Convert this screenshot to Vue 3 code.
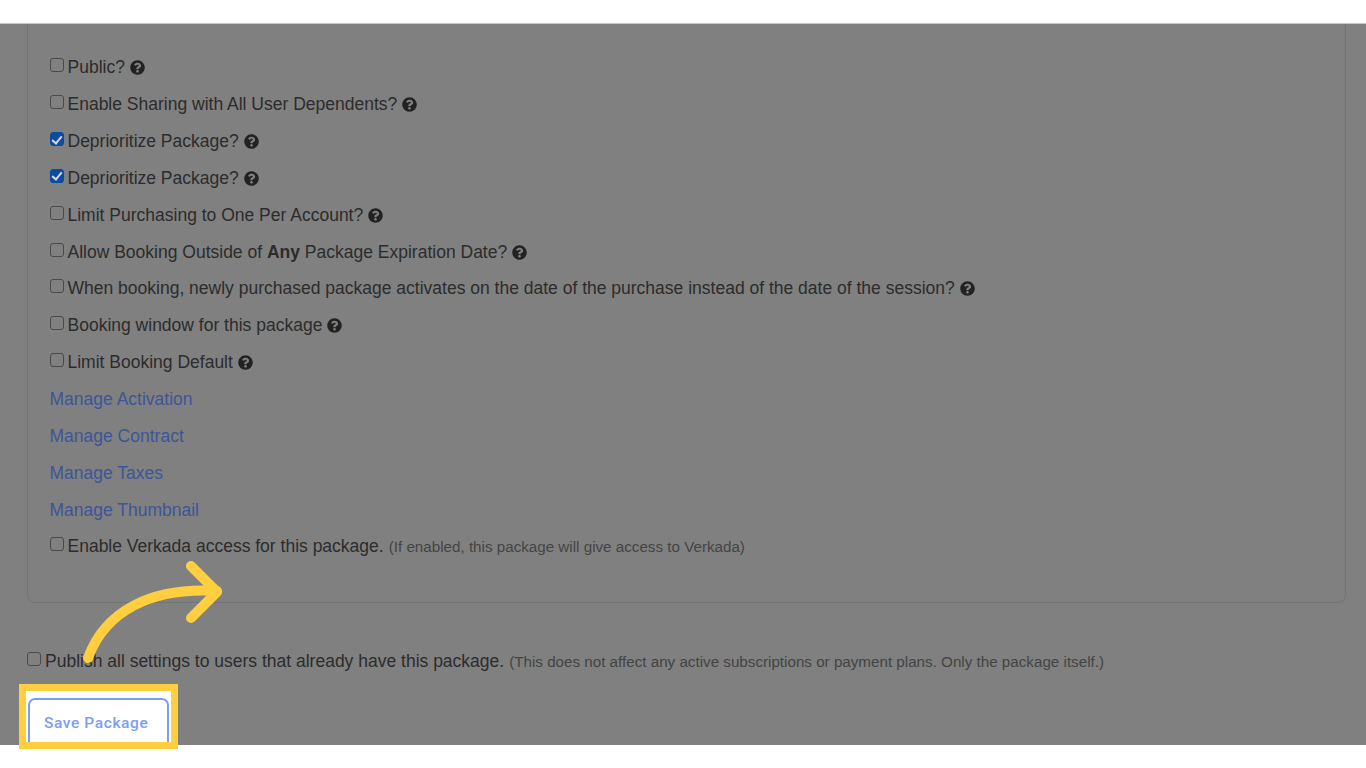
<script setup>
const rows = [
  { label: 'Public?', help: true },
  { label: 'Enable Sharing with All User Dependents?', help: true },
  { label: 'Deprioritize Package?', help: true, checked: true },
  { label: 'Deprioritize Package?', help: true, checked: true },
  { label: 'Limit Purchasing to One Per Account?', help: true },
  { before: 'Allow Booking Outside of ', bold: 'Any', label: ' Package Expiration Date?', help: true },
  { label: 'When booking, newly purchased package activates on the date of the purchase instead of the date of the session?', help: true },
  { label: 'Booking window for this package', help: true },
  { label: 'Limit Booking Default', help: true },
]
const links = ['Manage Activation', 'Manage Contract', 'Manage Taxes', 'Manage Thumbnail']

const helpPath = 'M504 256c0 136.997-111.043 248-248 248S8 392.997 8 256C8 119.083 119.043 8 256 8s248 111.083 248 248zM262.655 90c-54.497 0-89.255 22.957-116.549 63.758-3.536 5.286-2.353 12.415 2.715 16.258l34.699 26.31c5.205 3.947 12.621 3.008 16.665-2.122 17.864-22.658 30.113-35.797 57.303-35.797 20.429 0 45.698 13.148 45.698 32.958 0 14.976-12.363 22.667-32.534 33.976C247.128 238.528 216 254.941 216 296v4c0 6.627 5.373 12 12 12h56c6.627 0 12-5.373 12-12v-1.333c0-28.462 83.186-29.647 83.186-106.667 0-58.002-60.165-102-116.531-102zM256 338c-25.365 0-46 20.635-46 46 0 25.364 20.635 46 46 46s46-20.636 46-46c0-25.365-20.635-46-46-46z'
</script>

<template>
  <div class="page">
    <div class="stage">
      <section class="panel">
        <label class="row" v-for="(row, i) in rows" :key="i">
          <input type="checkbox" class="check" :checked="row.checked" />
          <span class="text">{{ row.before }}<b v-if="row.bold">{{ row.bold }}</b>{{ row.label }}</span>
          <svg v-if="row.help" class="help" viewBox="0 0 512 512"><path :d="helpPath" /></svg>
        </label>
        <div class="row" v-for="link in links" :key="link">
          <a class="link">{{ link }}</a>
        </div>
        <label class="row">
          <input type="checkbox" class="check" />
          <span class="text">Enable Verkada access for this package.</span>
          <small class="note">(If enabled, this package will give access to Verkada)</small>
        </label>
      </section>

      <label class="publish">
        <input type="checkbox" class="check" />
        <span class="text">Publish all settings to users that already have this package.</span>
        <small class="note">(This does not affect any active subscriptions or payment plans. Only the package itself.)</small>
      </label>

      <div class="highlight">
        <button class="save">Save Package</button>
      </div>
    </div>

    <svg class="arrow" viewBox="0 0 150 70" width="150" height="70">
      <path d="M7 97C24 50 70 26 136 30" />
      <path d="M110 5L136 31L110 57" />
    </svg>
  </div>
</template>

<style scoped>
.page {
  position: relative;
  height: 768px;
  overflow: hidden;
  background: #fff;
  padding-top: 23px;
  box-sizing: border-box;
  font-family: 'Liberation Sans', Arial, sans-serif;
}

.stage {
  position: relative;
  height: 722px;
  background: #808080;
  border-top: 1px solid #c9c9c9;
  box-sizing: border-box;
  padding: 0 20px 0 27px;
}

.panel {
  box-sizing: border-box;
  height: 579px;
  padding: 25.5px 21.5px 0;
  border: 1.5px solid #747474;
  border-top: 0;
  border-radius: 0 0 8px 8px;
}

.row {
  display: flex;
  align-items: center;
  height: 36.85px;
}

.check {
  appearance: none;
  position: relative;
  flex: none;
  width: 14px;
  height: 14px;
  margin: -5px 4px 0 0;
  background: #808080;
  border: 1px solid #4a4a4a;
  border-radius: 3px;
  box-sizing: border-box;
}

.check:checked {
  background: #0b4ba0;
  border-color: #0b4ba0;
}

.check:checked::after {
  content: '';
  position: absolute;
  left: 3.5px;
  top: 0.5px;
  width: 4px;
  height: 8px;
  border: solid #d8d8d8;
  border-width: 0 2px 2px 0;
  transform: rotate(40deg);
}

.text {
  font-size: 17.5px;
  color: #2c2c2c;
  white-space: pre-wrap;
}

.help {
  flex: none;
  width: 15px;
  height: 15px;
  margin-left: 5px;
  fill: #222;
}

.link {
  font-size: 17.5px;
  color: #3d5599;
}

.note {
  margin-left: 5px;
  font-size: 15.2px;
  color: #444;
}

.publish {
  display: flex;
  align-items: center;
  height: 36px;
  margin-top: 40px;
}

.highlight {
  position: absolute;
  left: 19px;
  top: 660px;
  width: 159px;
  height: 65px;
  box-sizing: border-box;
  overflow: hidden;
  padding: 7px 1px 0 2px;
  background: #fff;
  border: 7px solid #ffcf3f;
}

.save {
  display: flex;
  align-items: flex-start;
  width: 141px;
  height: 70px;
  padding: 14px 0 0 14px;
  background: #fff;
  border: 2px solid #7c9cf5;
  border-radius: 7px;
  color: #7c9cf5;
  font: 500 15.5px Roboto, 'Liberation Sans', sans-serif;
  letter-spacing: 0.6px;
}

.arrow {
  position: absolute;
  left: 81px;
  top: 561px;
  overflow: visible;
  fill: none;
  stroke: #ffcf3f;
  stroke-width: 10;
  stroke-linecap: round;
  stroke-linejoin: round;
}
</style>

<style>
html, body {
  margin: 0;
  background: #fff;
}
</style>
